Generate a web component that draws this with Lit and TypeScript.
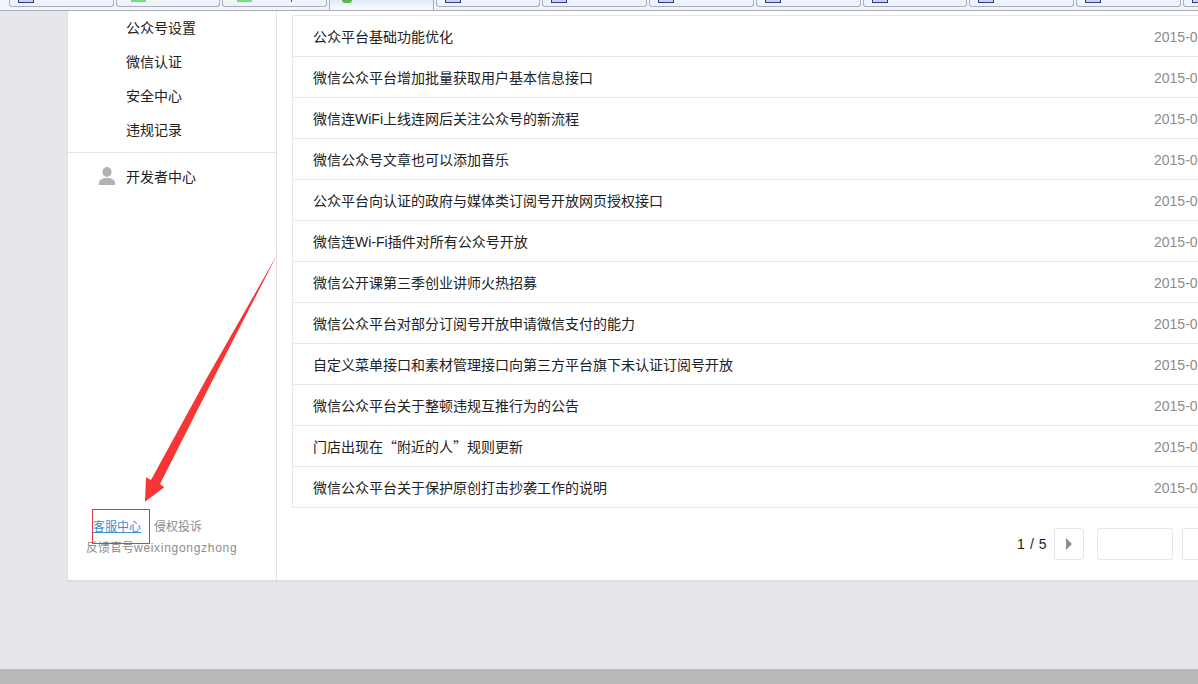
import { LitElement, html, css, svg } from "lit";
import { customElement } from "lit/decorators.js";

const TITLES = [
  "公众平台基础功能优化",
  "微信公众平台增加批量获取用户基本信息接口",
  "微信连WiFi上线连网后关注公众号的新流程",
  "微信公众号文章也可以添加音乐",
  "公众平台向认证的政府与媒体类订阅号开放网页授权接口",
  "微信连Wi-Fi插件对所有公众号开放",
  "微信公开课第三季创业讲师火热招募",
  "微信公众平台对部分订阅号开放申请微信支付的能力",
  "自定义菜单接口和素材管理接口向第三方平台旗下未认证订阅号开放",
  "微信公众平台关于整顿违规互推行为的公告",
  "门店出现在“附近的人”规则更新",
  "微信公众平台关于保护原创打击抄袭工作的说明",
];
const MENU = ["公众号设置", "微信认证", "安全中心", "违规记录"];
const TABS = ["doc", "green", "green-dot", "active", "doc", "doc", "doc", "doc", "doc", "doc", "doc", "doc"];

@customElement("app-root")
export class AppRoot extends LitElement {
  static styles = css`
    :host {
      display: flex;
      flex-direction: column;
      position: relative;
      width: 1198px;
      height: 684px;
      overflow: hidden;
      background: #e6e7eb;
      font-family: "Liberation Sans", "Noto Sans CJK SC", sans-serif;
      font-size: 14px;
      color: #222;
    }
    .strip {
      flex: none;
      display: flex;
      height: 10px;
      padding-left: 9px;
      background: #f1f5fb;
      border-bottom: 1px solid #a9aeb8;
    }
    .tab {
      flex: none;
      position: relative;
      width: 104.7px;
      margin-right: 2px;
      height: 7px;
      box-sizing: border-box;
      background: #eff3fb;
      border: 1px solid #a9aeb8;
      border-top: none;
      border-radius: 0 0 3px 3px;
      padding-left: 8px;
    }
    .tab.active {
      height: 10px;
      background: linear-gradient(#dfeaf8, #f8fbfe);
      border-bottom: none;
      border-radius: 0;
      padding-left: 12px;
    }
    .doc {
      display: block;
      width: 16px;
      height: 3px;
      box-sizing: border-box;
      border: 1px solid #2a3a8c;
      border-top: none;
      background: #c8d2ee;
    }
    .green {
      display: block;
      width: 15px;
      height: 2px;
      margin-left: 6px;
      background: #6fe07f;
    }
    .green.round {
      width: 10px;
      height: 3px;
      margin-left: 0;
      border-radius: 0 0 5px 5px;
      background: #58b84a;
    }
    .dot {
      position: absolute;
      left: 68px;
      top: 0;
      width: 1px;
      height: 2px;
      background: #555;
    }
    .shell {
      flex: none;
      display: flex;
      height: 569px;
      margin-left: 68px;
      background: #fff;
      border-bottom: 2px solid #dcdde0;
      box-shadow: -1px 0 0 #dfe0e3;
    }
    .side {
      flex: none;
      display: flex;
      flex-direction: column;
      width: 209px;
      box-sizing: border-box;
      border-right: 1px solid #e4e4e7;
    }
    .menu {
      padding-bottom: 5px;
      border-bottom: 1px solid #e4e5e7;
    }
    .item {
      height: 34px;
      line-height: 34px;
      padding-left: 58px;
    }
    .dev {
      display: flex;
      align-items: center;
      gap: 11px;
      height: 46px;
      padding-left: 31px;
    }
    .person {
      display: block;
      width: 16px;
      height: 18px;
    }
    .foot {
      margin-top: auto;
      padding-bottom: 22px;
      font-size: 12px;
      line-height: 21px;
      color: #8d8d8d;
    }
    .foot-links {
      display: flex;
      gap: 13px;
      padding-left: 25px;
    }
    .foot-links a {
      color: #3f8fcf;
      text-decoration: underline;
    }
    .foot-id {
      padding-left: 18px;
      line-height: 20px;
    }
    .foot-id span {
      letter-spacing: 0.7px;
    }
    .main {
      flex: 1;
      min-width: 0;
      padding: 4px 0 0 15px;
    }
    .list {
      border: 1px solid #e7e7eb;
      border-right: none;
    }
    .row {
      display: flex;
      justify-content: space-between;
      height: 41px;
      line-height: 40px;
      box-sizing: border-box;
      padding: 1px 0 0 20px;
      border-bottom: 1px solid #e7e7eb;
    }
    .row:last-child {
      border-bottom: none;
      height: 40px;
    }
    .cjk {
      font-family: "Noto Sans CJK SC", sans-serif;
      margin-top: -1px;
    }
    .date {
      width: 44px;
      overflow: hidden;
      color: #8d8d8d;
    }
    .pager {
      display: flex;
      align-items: center;
      height: 32px;
      margin-top: 20px;
      padding-left: 725px;
    }
    .count {
      flex: none;
      width: 37px;
      white-space: nowrap;
      letter-spacing: 0.6px;
    }
    .btn {
      flex: none;
      display: flex;
      align-items: center;
      justify-content: center;
      width: 30px;
      height: 32px;
      box-sizing: border-box;
      border: 1px solid #e7e7eb;
      border-radius: 3px;
      background: #fff;
    }
    .tri {
      width: 0;
      height: 0;
      border-left: 6px solid #8f8f8f;
      border-top: 6px solid transparent;
      border-bottom: 6px solid transparent;
    }
    .input {
      flex: none;
      width: 76px;
      height: 32px;
      margin: 0 9px 0 13px;
      box-sizing: border-box;
      border: 1px solid #e7e7eb;
      border-radius: 3px;
    }
    .status {
      flex: none;
      height: 15px;
      margin-top: 87px;
      background: #b8b9b8;
    }
    .note {
      position: absolute;
      inset: 0;
      pointer-events: none;
    }
  `;

  private tab(kind: string) {
    if (kind === "doc") return html`<div class="tab"><span class="doc"></span></div>`;
    if (kind === "active") return html`<div class="tab active"><span class="green round"></span></div>`;
    return html`<div class="tab">
      <span class="green"></span>${kind === "green-dot" ? html`<span class="dot"></span>` : ""}
    </div>`;
  }

  render() {
    return html`
      <div class="strip">${TABS.map((k) => this.tab(k))}</div>
      <div class="shell">
        <aside class="side">
          <div class="menu">${MENU.map((m) => html`<div class="item">${m}</div>`)}</div>
          <div class="dev">
            <svg class="person" viewBox="0 0 16 18">
              <ellipse cx="8" cy="5" rx="4.6" ry="5" fill="#b2b2b2"></ellipse>
              <path d="M0 18v-2.5c0-2.6 3.2-3.4 5.6-4.4h4.8c2.4 1 5.6 1.8 5.6 4.4V18z" fill="#b2b2b2"></path>
            </svg>
            <span>开发者中心</span>
          </div>
          <div class="foot">
            <div class="foot-links"><a>客服中心</a><span>侵权投诉</span></div>
            <div class="foot-id">反馈官号<span>weixingongzhong</span></div>
          </div>
        </aside>
        <section class="main">
          <div class="list">
            ${TITLES.map(
              (t) => html`<div class="row"><span class=${t.includes("“") ? "cjk" : ""}>${t}</span><span class="date">2015-0</span></div>`
            )}
          </div>
          <div class="pager">
            <span class="count">1 / 5</span>
            <span class="btn"><span class="tri"></span></span>
            <span class="input"></span>
            <span class="btn"></span>
          </div>
        </section>
      </div>
      <div class="status"></div>
      <svg class="note" width="1198" height="684" viewBox="0 0 1198 684">
        ${svg`<rect x="92.5" y="509.5" width="57" height="34" fill="none" stroke="#d8403e"></rect>
        <path d="M278 253L212.7 380L160 484L164.3 487.3L145 501.7L146 477.3L151 480L205.7 380Z" fill="#f73535"></path>`}
      </svg>
    `;
  }
}
